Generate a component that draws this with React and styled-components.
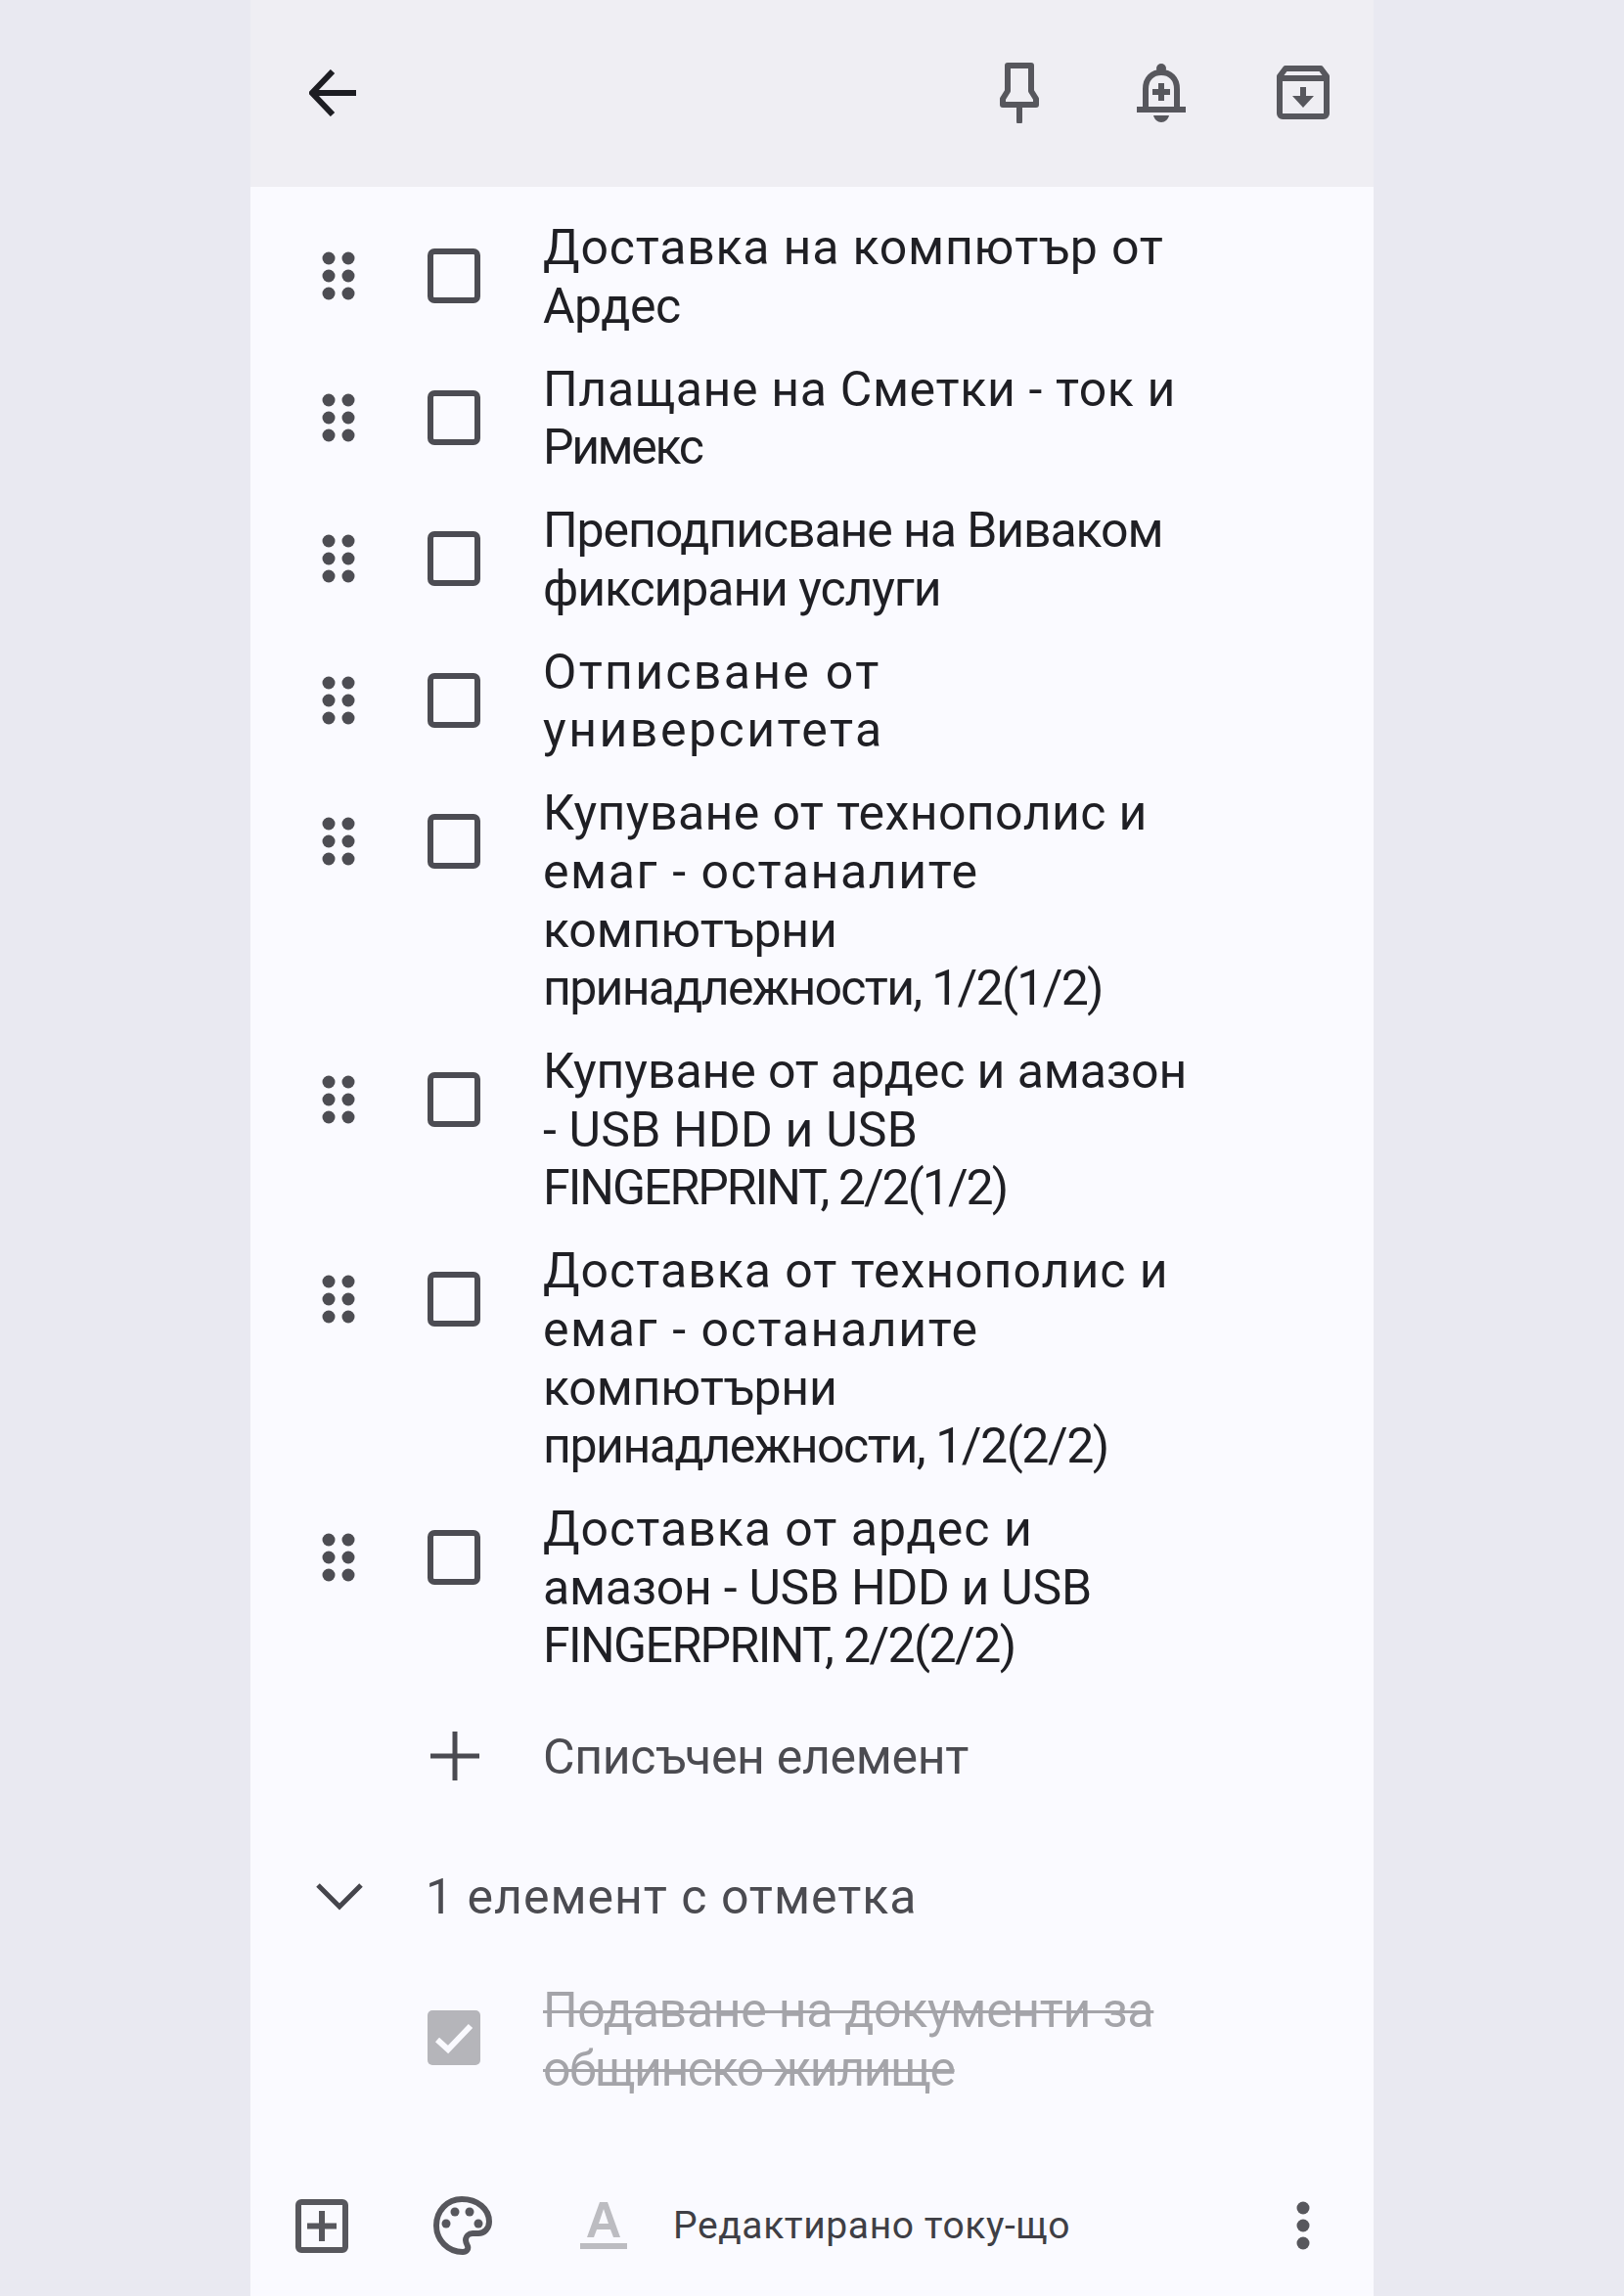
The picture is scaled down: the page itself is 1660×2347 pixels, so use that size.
import React from 'react';
import styled, { createGlobalStyle } from 'styled-components';

const GlobalStyle = createGlobalStyle`
  html, body { margin: 0; padding: 0; }
  body {
    background: #e9e9f1;
    font-family: Roboto, "Noto Sans", sans-serif;
  }
`;

const Page = styled.div`
  display: flex;
  justify-content: center;
  min-height: 2347px;
`;

const Phone = styled.main`
  width: 1148px;
  height: 2347px;
  background: #fafaff;
  display: flex;
  flex-direction: column;
  color: #1f1f24;
`;

const Header = styled.header`
  height: 191px;
  flex: none;
  background: #efeef3;
  display: flex;
  align-items: center;
  justify-content: space-between;
  padding: 0 45px 2px 60px;
  box-sizing: border-box;
`;

const HeaderActions = styled.div`
  display: flex;
  align-items: center;
  gap: 93px;
`;

const PinSlot = styled.div`
  margin-right: 6px;
  display: flex;
`;

const List = styled.ul`
  list-style: none;
  margin: 0;
  padding: 19px 0 0;
`;

const Row = styled.li`
  display: grid;
  grid-template-columns: 60px 176px 1fr;
  align-items: start;
  padding: 12.7px 0 12.7px 60px;
`;

const IconCell = styled.div`
  height: 119px;
  display: flex;
  align-items: center;
  justify-content: center;
`;

const RowText = styled.div`
  padding: 1.5px 0 0 3px;
  margin-bottom: -1.5px;
  font-size: 50px;
  line-height: 59.6px;
  white-space: nowrap;
`;

const Line = styled.div`
  color: ${({ $done, $muted }) => ($done ? '#a4a4a9' : $muted ? '#4b4b51' : '#1f1f24')};
  letter-spacing: ${({ $spacing }) => $spacing}px;
  text-decoration: ${({ $done }) => ($done ? 'line-through' : 'none')};
  text-decoration-thickness: 3px;
`;

const AddRow = styled(Row)`
  align-items: center;
  padding: 0 0 0 60px;
  height: 60px;
  margin-top: 41px;
`;

const AddCell = styled(IconCell)`
  height: 60px;
  padding-left: 2px;
`;

const CollapseRow = styled.div`
  display: flex;
  align-items: center;
  height: 60px;
  padding-left: 67px;
  margin-top: 84px;
  gap: 64px;
`;

const CollapseLabel = styled.div`
  font-size: 50px;
  line-height: 60px;
  color: #4b4b51;
  letter-spacing: 1px;
  white-space: nowrap;
`;

const DoneRow = styled(Row)`
  margin-top: 24px;
`;

const DoneCell = styled(IconCell)`
  height: 117px;
`;

const Toolbar = styled.footer`
  margin-top: auto;
  height: 120px;
  display: flex;
  align-items: center;
  padding: 0 65px 24px 46px;
  box-sizing: border-box;
`;

const Palette = styled.div`
  margin-left: 87px;
  display: flex;
`;

const FormatA = styled.div`
  margin-left: 90px;
  display: flex;
`;

const EditedText = styled.div`
  margin-left: 47px;
  font-size: 39px;
  line-height: 48px;
  color: #3f3f45;
  letter-spacing: 0.6px;
  white-space: nowrap;
  flex: 1;
`;

const Glyph = styled.svg`
  display: block;
  flex: none;
`;

const BackIcon = () => (
  <Glyph width="48" height="48" viewBox="0 0 48 48" fill="none" stroke="#1d1d22" strokeWidth="6">
    <path d="M24 2 3 24l21 22M3 24h45" />
  </Glyph>
);

const PinIcon = () => (
  <Glyph width="42" height="62" viewBox="0 0 42 62" fill="none" stroke="#57575d" strokeWidth="6" strokeLinejoin="round">
    <path d="M9 3h24v26l5 8v6H4v-6l5-8z" />
    <path d="M21 43v17" strokeLinecap="round" />
  </Glyph>
);

const BellIcon = () => (
  <Glyph width="50" height="60" viewBox="0 0 50 60" fill="none" stroke="#57575d" strokeWidth="6">
    <circle cx="25" cy="5" r="5" fill="#57575d" stroke="none" />
    <path d="M9 47V26C9 15 16 9 25 9s16 6 16 17v21" />
    <path d="M0 47h50" />
    <path d="M25 20v18M16 29h18" />
    <path d="M17 53h16c-1 4-4 7-8 7s-7-3-8-7z" fill="#57575d" stroke="none" />
  </Glyph>
);

const ArchiveIcon = () => (
  <Glyph width="54" height="55" viewBox="0 0 54 55" fill="none" stroke="#57575d" strokeWidth="6" strokeLinejoin="round">
    <path d="M3 11 9 3h36l6 8v38a3 3 0 0 1-3 3H6a3 3 0 0 1-3-3z" />
    <path d="M3 13h48" />
    <path d="M27 22v16" />
    <path d="M16 31h22L27 43z" fill="#57575d" stroke="none" />
  </Glyph>
);

const DragIcon = () => (
  <Glyph width="34" height="50" viewBox="0 0 34 50" fill="#4d4d53">
    {[7, 25, 43].map((y) => (
      <g key={y}>
        <circle cx="7" cy={y} r="6.5" />
        <circle cx="27" cy={y} r="6.5" />
      </g>
    ))}
  </Glyph>
);

const BoxIcon = () => (
  <Glyph width="54" height="56" viewBox="0 0 54 56" fill="none" stroke="#4c4c53" strokeWidth="6">
    <rect x="3" y="3" width="48" height="50" rx="4" />
  </Glyph>
);

const CheckedIcon = () => (
  <Glyph width="54" height="56" viewBox="0 0 54 56">
    <rect width="54" height="56" rx="5" fill="#b5b5ba" />
    <path d="M10 30l11 10L44 16" fill="none" stroke="#fafaff" strokeWidth="6" />
  </Glyph>
);

const PlusIcon = () => (
  <Glyph width="50" height="50" viewBox="0 0 50 50" stroke="#4a4a51" strokeWidth="5">
    <path d="M25 0v50M0 25h50" />
  </Glyph>
);

const ChevronIcon = () => (
  <Glyph width="48" height="28" viewBox="0 0 48 28" fill="none" stroke="#45454c" strokeWidth="5">
    <path d="M2 2l22 22L46 2" />
  </Glyph>
);

const PlusBoxIcon = () => (
  <Glyph width="54" height="55" viewBox="0 0 54 55" fill="none" stroke="#57575d" strokeWidth="6">
    <rect x="3" y="3" width="48" height="49" rx="3" />
    <path d="M27 12v31M12 27.500h30" />
  </Glyph>
);

const PaletteIcon = () => (
  <Glyph width="60" height="60" viewBox="0 0 60 60" fill="none">
    <path
      d="M29 3C14 3 3 15 3 30s12 27 27 27c4 0 6-3 5-6-1-2-2-4-2-6 0-4 3-7 7-7h6c6 0 11-5 11-12C57 13 45 3 29 3z"
      stroke="#57575d"
      strokeWidth="6"
    />
    <circle cx="13" cy="28" r="4.500" fill="#57575d" />
    <circle cx="22" cy="16" r="4.500" fill="#57575d" />
    <circle cx="37" cy="16" r="4.500" fill="#57575d" />
    <circle cx="46" cy="28" r="4.500" fill="#57575d" />
  </Glyph>
);

const FormatIcon = () => (
  <Glyph width="48" height="50" viewBox="0 0 48 50">
    <path
      d="M7 37 20 1h8l13 36h-7l-3-8H17l-3 8zM19 23h10l-5-15z"
      fill="#bcbcc1"
      fillRule="evenodd"
    />
    <rect y="43" width="48" height="6" fill="#bcbcc1" />
  </Glyph>
);

const MoreIcon = () => (
  <Glyph width="14" height="50" viewBox="0 0 14 50" fill="#57575d">
    <circle cx="7" cy="7" r="6.500" />
    <circle cx="7" cy="25" r="6.500" />
    <circle cx="7" cy="43" r="6.500" />
  </Glyph>
);

// [text, letter-spacing] per line, Roboto runs narrower or wider than the phone font
const items = [
  [['Доставка на компютър от', 0.8], ['Ардес', -0.5]],
  [['Плащане на Сметки - ток и', 0.65], ['Римекс', -2.4]],
  [['Преподписване на Виваком', -1.1], ['фиксирани услуги', -1.1]],
  [['Отписване от', 2.3], ['университета', 2.5]],
  [['Купуване от технополис и', 0.4], ['емаг - останалите', 1.6], ['компютърни', -0.2], ['принадлежности, 1/2(1/2)', -1.7]],
  [['Купуване от ардес и амазон', -0.1], ['- USB HDD и USB', 0.2], ['FINGERPRINT, 2/2(1/2)', -2]],
  [['Доставка от технополис и', 1], ['емаг - останалите', 1.6], ['компютърни', -0.2], ['принадлежности, 1/2(2/2)', -1.45]],
  [['Доставка от ардес и', 1], ['амазон - USB HDD и USB', -0.27], ['FINGERPRINT, 2/2(2/2)', -1.6]],
];

export default function App() {
  return (
    <Page lang="bg">
      <GlobalStyle />
      <Phone>
        <Header>
          <BackIcon />
          <HeaderActions>
            <PinSlot>
              <PinIcon />
            </PinSlot>
            <BellIcon />
            <ArchiveIcon />
          </HeaderActions>
        </Header>

        <List>
          {items.map((lines) => (
            <Row key={lines[0][0]}>
              <IconCell>
                <DragIcon />
              </IconCell>
              <IconCell>
                <BoxIcon />
              </IconCell>
              <RowText>
                {lines.map(([text, spacing]) => (
                  <Line key={text} $spacing={spacing}>{text}</Line>
                ))}
              </RowText>
            </Row>
          ))}
          <AddRow>
            <span />
            <AddCell>
              <PlusIcon />
            </AddCell>
            <RowText>
              <Line $muted $spacing={-0.3}>Списъчен елемент</Line>
            </RowText>
          </AddRow>
        </List>

        <CollapseRow>
          <ChevronIcon />
          <CollapseLabel>1 елемент с отметка</CollapseLabel>
        </CollapseRow>

        <List as="div">
          <DoneRow as="div">
            <span />
            <DoneCell>
              <CheckedIcon />
            </DoneCell>
            <RowText>
              <Line $done $spacing={-0.3}>Подаване на документи за</Line>
              <Line $done $spacing={-1.4}>общинско жилище</Line>
            </RowText>
          </DoneRow>
        </List>

        <Toolbar>
          <PlusBoxIcon />
          <Palette>
            <PaletteIcon />
          </Palette>
          <FormatA>
            <FormatIcon />
          </FormatA>
          <EditedText>Редактирано току-що</EditedText>
          <MoreIcon />
        </Toolbar>
      </Phone>
    </Page>
  );
}
